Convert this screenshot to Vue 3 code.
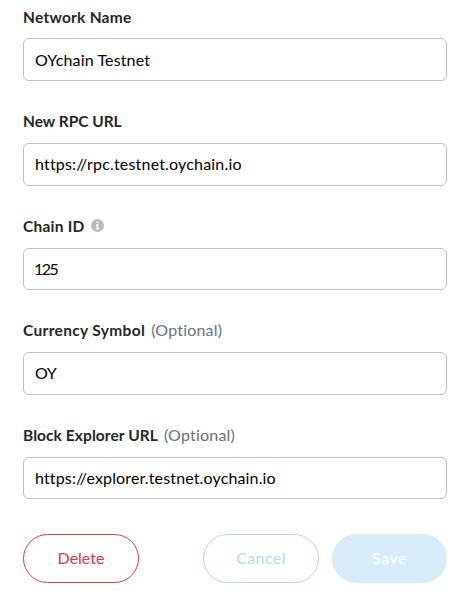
<script setup>
import { ref } from 'vue'

const fields = ref([
  { id: 'name', label: 'Network Name', value: 'OYchain Testnet' },
  { id: 'rpc', label: 'New RPC URL', value: 'https://rpc.testnet.oychain.io' },
  { id: 'chain', label: 'Chain ID', value: '125', info: true },
  { id: 'symbol', label: 'Currency Symbol', value: 'OY', optional: true },
  { id: 'explorer', label: 'Block Explorer URL', value: 'https://explorer.testnet.oychain.io', optional: true },
])
</script>

<template>
  <form class="network-form" @submit.prevent>
    <div v-for="field in fields" :key="field.id" class="field">
      <label class="heading" :for="field.id">
        <span class="title" :class="`title-${field.id}`">{{ field.label }}</span>
        <span v-if="field.optional" class="optional">(Optional)</span>
        <svg v-if="field.info" class="info" viewBox="0 0 13 13" aria-hidden="true">
          <circle cx="6.5" cy="6.5" r="6.5" fill="#b8b8b8" />
          <path d="M5.6 2.4h1.8v1.700H5.6zM5 5.2h2.4v4.1h.8v1.2H4.8V9.3h.8V6.4H5z" fill="#fff" />
        </svg>
      </label>
      <input :id="field.id" v-model="field.value" class="control" :class="`control-${field.id}`" type="text" spellcheck="false" />
    </div>
    <div class="actions">
      <button class="btn delete" type="button">Delete</button>
      <button class="btn cancel" type="button" disabled>Cancel</button>
      <button class="btn save" type="submit" disabled>Save</button>
    </div>
  </form>
</template>

<style>
body {
  background: #fff;
}
</style>

<style scoped>
.network-form {
  box-sizing: border-box;
  width: 468px;
  height: 604px;
  padding: 5.6px 21px 0 23px;
  overflow: hidden;
  font-family: Lato, "Liberation Sans", sans-serif;
  font-size: 16px;
}
.field {
  height: 104.6px;
}
.heading {
  display: flex;
  align-items: center;
  height: 22px;
  margin-bottom: 10.8px;
  line-height: 22px;
  color: #24272a;
  white-space: nowrap;
}
.title {
  font-size: 15.5px;
  font-weight: 700;
  letter-spacing: 0.24px;
}
.title-rpc {
  letter-spacing: -0.02px;
}
.title-symbol {
  letter-spacing: 0.34px;
}
.title-explorer {
  letter-spacing: 0.08px;
}
.optional {
  margin-left: 6px;
  color: #6a737d;
  letter-spacing: 0.2px;
}
.info {
  width: 13px;
  height: 13px;
  margin-left: 6px;
}
.control {
  display: block;
  box-sizing: border-box;
  width: 424px;
  height: 42.6px;
  padding: 0 11px 1px;
  border: 1px solid #bbc0c5;
  border-radius: 6px;
  outline: none;
  background: #fff;
  color: #000;
  font: inherit;
  letter-spacing: 0.14px;
}
.control-rpc {
  letter-spacing: 0.18px;
}
.control-chain {
  padding-left: 10px;
  letter-spacing: -1.5px;
}
.control-symbol {
  letter-spacing: -0.4px;
}
.actions {
  display: flex;
  padding-top: 5.4px;
}
.btn {
  box-sizing: border-box;
  width: 116px;
  height: 49px;
  padding: 0 0 2px;
  border: 1px solid;
  border-radius: 25px;
  background: #fff;
  font: inherit;
}
.delete {
  margin-right: auto;
  border-color: #d73a49;
  color: #d73a49;
}
.cancel {
  margin-right: 13px;
  border-color: #b2d8f2;
  color: #b2d8f2;
  letter-spacing: 0.4px;
}
.save {
  width: 115px;
  border-color: #d8ebf9;
  background: #d8ebf9;
  color: #fff;
  letter-spacing: 0.5px;
}
</style>
